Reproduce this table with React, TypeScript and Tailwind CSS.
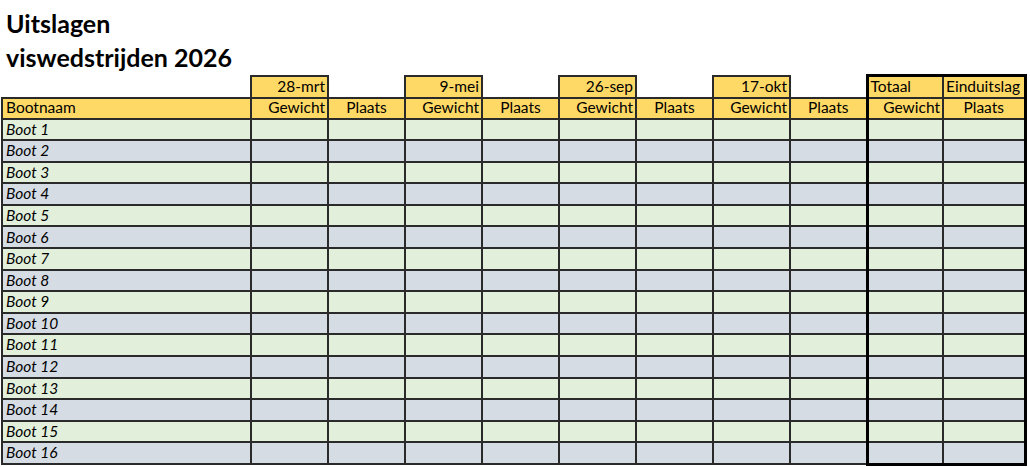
const weeks = ["28-mrt", "9-mei", "26-sep", "17-okt"];
const boats = Array.from({ length: 16 }, (_, i) => `Boot ${i + 1}`);

const cell = "border-2 border-[#2a2a2a] p-0";

export default function App() {
  return (
    <div className="w-[1030px] h-[467px] overflow-hidden bg-white font-['Lato',sans-serif] text-black">
      <h1 className="pl-[6px] pt-[6px] text-[25px] font-bold leading-[34px]">
        Uitslagen
        <br />
        viswedstrijden 2026
      </h1>

      <table className="ml-[1px] border-collapse table-fixed text-[15.5px] leading-none">
        <colgroup>
          <col className="w-[249px]" />
          {Array.from({ length: 8 }, (_, i) => (
            <col key={i} className="w-[77px]" />
          ))}
          <col className="w-[76px]" />
          <col className="w-[82px]" />
        </colgroup>
        <thead>
          <tr className="h-[22px]">
            <th className="p-0" />
            {weeks.map((w) => (
              <>
                <th key={w} className={`${cell} bg-[#ffd966] pr-[2px] text-right font-normal`}>
                  {w}
                </th>
                <th key={w + "-x"} className="p-0" />
              </>
            ))}
            <th className={`${cell} border-l-[3px] border-t-[3px] border-l-black border-t-black bg-[#ffd966] pl-[2px] text-left font-normal`}>
              Totaal
            </th>
            <th className={`${cell} border-r-[3px] border-t-[3px] border-r-black border-t-black bg-[#ffd966] pl-[2px] text-left font-normal`}>
              Einduitslag
            </th>
          </tr>
          <tr className="h-[21px] bg-[#ffd966]">
            <th className={`${cell} pl-[3px] text-left font-normal`}>Bootnaam</th>
            {weeks.map((w) => (
              <>
                <th key={w + "-g"} className={`${cell} pr-[2px] text-right font-normal`}>
                  Gewicht
                </th>
                <th key={w + "-p"} className={`${cell} text-center font-normal`}>
                  Plaats
                </th>
              </>
            ))}
            <th className={`${cell} border-l-[3px] border-l-black pr-[2px] text-right font-normal`}>
              Gewicht
            </th>
            <th className={`${cell} border-r-[3px] border-r-black text-center font-normal`}>
              Plaats
            </th>
          </tr>
        </thead>
        <tbody>
          {boats.map((b, i) => {
            const bg = i % 2 === 0 ? "bg-[#e2efda]" : "bg-[#d6dce4]";
            const last = i === boats.length - 1;
            return (
              <tr key={b} className={`h-[21.6px] ${bg}`}>
                <td className={`${cell} pl-[3px] italic`}>{b}</td>
                {Array.from({ length: 8 }, (_, j) => (
                  <td key={j} className={cell} />
                ))}
                <td className={`${cell} border-l-[3px] border-l-black ${last ? "border-b-[3px] border-b-black" : ""}`} />
                <td className={`${cell} border-r-[3px] border-r-black ${last ? "border-b-[3px] border-b-black" : ""}`} />
              </tr>
            );
          })}
        </tbody>
      </table>
    </div>
  );
}
